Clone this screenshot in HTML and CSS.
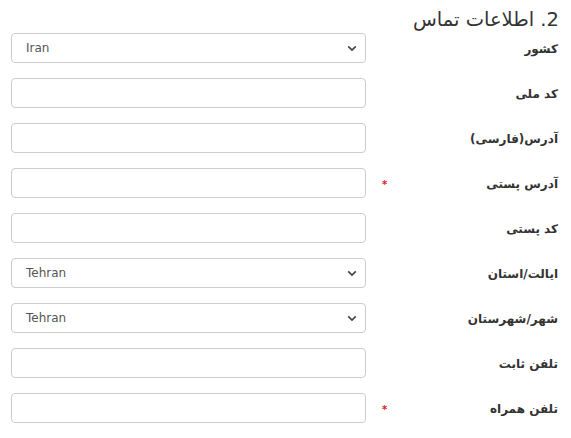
FILE: index.html
```html
<!DOCTYPE html>
<html lang="fa" dir="rtl">
<head>
<meta charset="utf-8">
<link rel="stylesheet" href="styles.css">
</head>
<body>
<div class="form">
  <h2 class="title">2. اطلاعات تماس</h2>
  <div class="row"><label class="lbl"><span>کشور</span></label><div class="field"><select class="ctl sel" dir="ltr"><option>Iran</option></select></div></div>
  <div class="row"><label class="lbl"><span>کد ملی</span></label><div class="field"><input class="ctl" type="text"></div></div>
  <div class="row"><label class="lbl"><span>آدرس(فارسی)</span></label><div class="field"><input class="ctl" type="text"></div></div>
  <div class="row"><label class="lbl"><span>آدرس پستی</span><i class="req">*</i></label><div class="field"><input class="ctl" type="text"></div></div>
  <div class="row"><label class="lbl"><span>کد پستی</span></label><div class="field"><input class="ctl" type="text"></div></div>
  <div class="row"><label class="lbl"><span>ایالت/استان</span></label><div class="field"><select class="ctl sel" dir="ltr"><option>Tehran</option></select></div></div>
  <div class="row"><label class="lbl"><span>شهر/شهرستان</span></label><div class="field"><select class="ctl sel" dir="ltr"><option>Tehran</option></select></div></div>
  <div class="row"><label class="lbl"><span>تلفن ثابت</span></label><div class="field"><input class="ctl" type="text"></div></div>
  <div class="row"><label class="lbl"><span>تلفن همراه</span><i class="req">*</i></label><div class="field"><input class="ctl" type="text"></div></div>
</div>
</body>
</html>
```
FILE: styles.css
```css
html, body { margin: 0; padding: 0; background: #fff; }
body { font-family: "DejaVu Sans", "Noto Sans", sans-serif; color: #333; }
.form { padding: 6px 11px 0 11px; width: 549px; box-sizing: content-box; }
.title { margin: 0; padding-right: 1px; height: 27px; font-size: 19.5px; font-weight: normal; line-height: 28px; color: #333; }
.row { display: flex; align-items: center; height: 30px; margin-bottom: 15px; }
.lbl { width: 183px; display: flex; justify-content: space-between; align-items: center; font-size: 12px; font-weight: bold; color: #333; box-sizing: border-box; padding-right: 2px; padding-left: 5px; padding-top: 1px; }
.req { font-style: normal; color: #e02020; font-size: 10px; line-height: 1; margin-top: 2px; }
.field { flex: 1; margin-right: 11px; }
.ctl { display: block; width: 100%; height: 30px; box-sizing: border-box; border: 1px solid #ccc; border-radius: 4px; background: #fff; font-family: "DejaVu Sans", sans-serif; font-size: 12px; color: #555; padding: 0 14px; outline: none; margin: 0; }
.sel { -webkit-appearance: none; appearance: none; text-align: left; background-image: url("data:image/svg+xml;utf8,<svg xmlns='http://www.w3.org/2000/svg' width='12' height='8' viewBox='0 0 12 8'><path d='M1.5 1.5 L6 6 L10.5 1.5' fill='none' stroke='%23444' stroke-width='2'/></svg>"); background-repeat: no-repeat; background-position: right 8px center; background-size: 10px 7px; }
```
